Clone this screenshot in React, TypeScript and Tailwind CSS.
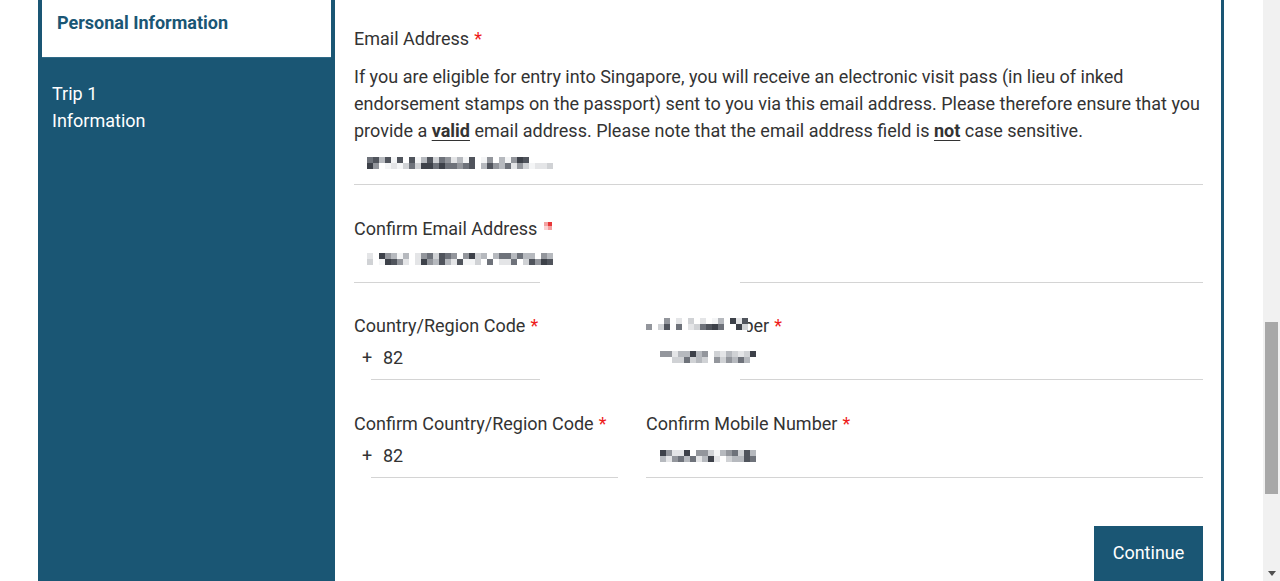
import React from "react";

const palette = [
  "#ffffff",
  "#f4f5f6",
  "#e4e5e7",
  "#d0d2d5",
  "#b6b9be",
  "#93969c",
  "#6e727a",
  "#50545c",
  "#3d4149",
];

function makeRng(seed: number) {
  let s = seed;
  return () => {
    s = (s * 1103515245 + 12345) & 0x7fffffff;
    return s / 0x7fffffff;
  };
}

function Mosaic({
  seed,
  cols,
  rows = 2,
  size = 6,
  light = 0,
}: {
  seed: number;
  cols: number;
  rows?: number;
  size?: number;
  light?: number;
}) {
  const rand = makeRng(seed);
  const cells: string[] = [];
  for (let r = 0; r < rows; r++) {
    for (let c = 0; c < cols; c++) {
      let v = rand() * 0.85 + 0.15;
      if (rand() < 0.12 + light) v = 0;
      const idx = Math.min(palette.length - 1, Math.floor(v * palette.length));
      cells.push(palette[idx]);
    }
  }
  return (
    <span
      className="inline-grid align-middle"
      style={{
        gridTemplateColumns: `repeat(${cols}, ${size}px)`,
        gridAutoRows: `${size}px`,
      }}
    >
      {cells.map((c, i) => (
        <span key={i} style={{ backgroundColor: c }} />
      ))}
    </span>
  );
}

const Req = () => <span className="text-[#ee1c1c] ml-[5px]">*</span>;

function Line({ segs }: { segs: [number, number | "flex"][] }) {
  return (
    <div className="absolute left-0 right-0 bottom-0 flex h-px">
      {segs.map(([gap, w], i) => (
        <React.Fragment key={i}>
          <div className="shrink-0" style={{ width: gap }} />
          {w === "flex" ? (
            <div className="flex-1 bg-[#d4d4d4]" />
          ) : (
            <div className="shrink-0 bg-[#d4d4d4]" style={{ width: w }} />
          )}
        </React.Fragment>
      ))}
    </div>
  );
}

export default function App() {
  return (
    <div
      className="h-[581px] w-[1280px] overflow-hidden flex bg-white text-[#333333] text-[18px] leading-[27px]"
      style={{ fontFamily: "Roboto, 'Liberation Sans', sans-serif" }}
    >
      <div className="flex-1 flex pl-[38px]">
        {/* Sidebar */}
        <aside className="w-[297px] shrink-0 bg-[#1a5674] px-[4px]">
          <div className="h-[58px] bg-white pl-[15px] pt-[9px] border-b border-[#2f6a87]">
            <span className="font-bold text-[#1a5674]">Personal Information</span>
          </div>
          <div className="pl-[10px] pt-[22px] text-white">
            <div>Trip 1</div>
            <div>Information</div>
          </div>
        </aside>

        {/* Form panel */}
        <main className="w-[889px] shrink-0 border-r-[3px] border-[#1a5674] pl-[19px] pr-[18px] pt-[25px]">
          {/* Email */}
          <div>
            <div>
              Email Address
              <Req />
            </div>
            <p className="mt-[11px] w-[856px]">
              If you are eligible for entry into Singapore, you will receive an electronic visit pass (in lieu of
              inked endorsement stamps on the passport) sent to you via this email address. Please therefore
              ensure that you provide a{" "}
              <b className="underline underline-offset-[3px]">valid</b> email address. Please note that the email
              address field is <b className="underline underline-offset-[3px]">not</b> case sensitive.
            </p>
            <div className="relative h-[41px] pt-[5px] pl-[13px]">
              <div className="h-[27px] flex items-center">
                <Mosaic seed={11} cols={31} />
              </div>
              <Line segs={[[0, "flex"]]} />
            </div>
          </div>

          {/* Confirm Email */}
          <div className="mt-[30px]">
            <div className="flex items-center">
              Confirm Email Address
              <span className="ml-[7px] inline-grid grid-cols-[4px_4px] grid-rows-[4px_4px] -mt-[6px]">
                <span className="bg-[#f3a3a3]" />
                <span className="bg-[#e8383a]" />
                <span className="bg-[#fbd3d3]" />
                <span className="bg-[#f4a0a0]" />
              </span>
            </div>
            <div className="relative h-[41px] pt-[3px] pl-[13px]">
              <div className="h-[27px] flex items-center">
                <Mosaic seed={47} cols={31} />
              </div>
              <Line segs={[[0, 186], [200, "flex"]]} />
            </div>
          </div>

          {/* Country code / mobile */}
          <div className="mt-[29px] flex gap-[28px]">
            <div className="w-[264px] shrink-0">
              <div>
                Country/Region Code
                <Req />
              </div>
              <div className="relative h-[41px] pt-[5px]">
                <div className="flex">
                  <span className="ml-[8px] w-[21px]">+</span>
                  <span>82</span>
                </div>
                <Line segs={[[17, 169]]} />
              </div>
            </div>
            <div className="flex-1">
              <div className="relative">
                Mobile Number
                <Req />
                <span className="absolute left-0 top-[4px] w-[101px] h-[18px] bg-white flex items-start pt-[2px]">
                  <Mosaic seed={5} cols={17} rows={2} light={0.25} />
                </span>
              </div>
              <div className="relative h-[41px] pt-[4px] pl-[14px]">
                <div className="h-[27px] flex items-center">
                  <Mosaic seed={73} cols={16} light={0.1} />
                </div>
                <Line segs={[[94, "flex"]]} />
              </div>
            </div>
          </div>

          {/* Confirm country code / mobile */}
          <div className="mt-[30px] flex gap-[28px]">
            <div className="w-[264px] shrink-0">
              <div>
                Confirm Country/Region Code
                <Req />
              </div>
              <div className="relative h-[41px] pt-[5px]">
                <div className="flex">
                  <span className="ml-[8px] w-[21px]">+</span>
                  <span>82</span>
                </div>
                <Line segs={[[17, "flex"]]} />
              </div>
            </div>
            <div className="flex-1">
              <div>
                Confirm Mobile Number
                <Req />
              </div>
              <div className="relative h-[41px] pt-[5px] pl-[14px]">
                <div className="h-[27px] flex items-center">
                  <Mosaic seed={29} cols={16} light={0.05} />
                </div>
                <Line segs={[[0, "flex"]]} />
              </div>
            </div>
          </div>

          <div className="mt-[48px] flex justify-end">
            <button className="w-[109px] h-[56px] bg-[#1a5674] text-white pb-[4px] flex items-start justify-center pt-[13px]">
              Continue
            </button>
          </div>
        </main>
      </div>

      {/* Scrollbar */}
      <div className="w-[17px] shrink-0 bg-[#f1f1f1] flex flex-col">
        <div className="h-[322px]" />
        <div className="h-[172px] mx-[2px] bg-[#a8a8a8]" />
        <div className="flex-1" />
        <div className="h-[10px] flex justify-center items-start">
          <svg width="8" height="5" viewBox="0 0 8 5">
            <path d="M0 0 L8 0 L4 5 Z" fill="#505050" />
          </svg>
        </div>
      </div>
    </div>
  );
}
